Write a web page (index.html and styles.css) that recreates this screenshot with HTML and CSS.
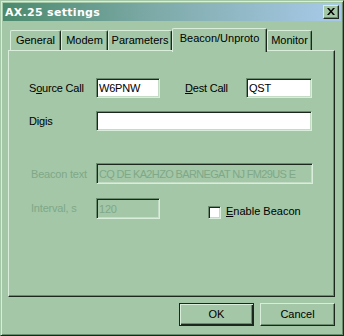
FILE: index.html
```html
<!DOCTYPE html>
<html>
<head>
<meta charset="utf-8">
<link rel="stylesheet" href="styles.css">
</head>
<body>
<div class="window">
  <div class="titlebar">
    <span class="title">AX.25 settings</span>
    <span class="close"><svg width="8" height="7" viewBox="0 0 8 7"><path d="M0 0h2l2 2.5 2-2.5h2l-3 3.5 3 3.5h-2l-2-2.5-2 2.5h-2l3-3.5z" fill="#000"/></svg></span>
  </div>
  <div class="tabs">
    <div class="tab t-general">General</div>
    <div class="tab t-modem">Modem</div>
    <div class="tab t-params">Parameters</div>
    <div class="tab active t-beacon">Beacon/Unproto</div>
    <div class="tab t-monitor">Monitor</div>
  </div>
  <div class="panel">
    <div class="row r1">
      <span class="label">S<u>o</u>urce Call</span>
      <span class="input w-src">W6PNW</span>
      <span class="label label-dest"><u>D</u>est Call</span>
      <span class="input w-dst">QST</span>
    </div>
    <div class="row r2">
      <span class="label">Digis</span>
      <span class="input w-digis"></span>
    </div>
    <div class="row r3">
      <span class="label disabled lbl-beacon">Beacon text</span>
      <span class="input off w-beacon">CQ DE KA2HZO BARNEGAT NJ FM29US E</span>
    </div>
    <div class="row r4">
      <span class="label disabled lbl-beacon">Interval, s</span>
      <span class="input off w-int">120</span>
      <span class="check"></span>
      <span class="check-label"><u>E</u>nable Beacon</span>
    </div>
  </div>
  <div class="buttons">
    <div class="btn default">OK</div>
    <div class="btn">Cancel</div>
  </div>
</div>
</body>
</html>
```

FILE: styles.css
```css
html, body {
  margin: 0;
  padding: 0;
  background: #a3c7a7;
}
.window {
  width: 344px;
  height: 336px;
  box-sizing: border-box;
  background: #a3c7a7;
  border: 1px solid;
  border-color: #a3c7a7 #1c281e #1c281e #a3c7a7;
  box-shadow: inset 1px 1px 0 #d8eeda, inset -1px -1px 0 #6b8c6f;
  padding: 2px;
  font-family: "Liberation Sans", Arial, sans-serif;
  font-size: 11px;
  color: #000;
  display: flex;
  flex-direction: column;
}
.titlebar {
  height: 18px;
  flex: none;
  background: linear-gradient(to right, #4b8a6d 0%, #7eaaa8 45%, #a8caea 100%);
  display: flex;
  align-items: center;
  justify-content: space-between;
  padding: 0 2px 0 2px;
}
.title {
  font-family: "DejaVu Sans", Verdana, sans-serif;
  font-weight: bold;
  font-size: 11px;
  color: #fff;
  letter-spacing: 0.3px;
}
.close {
  width: 16px;
  height: 14px;
  box-sizing: border-box;
  background: #a3c7a7;
  border: 1px solid;
  border-color: #d8eeda #1c281e #1c281e #d8eeda;
  box-shadow: inset -1px -1px 0 #6b8c6f;
  display: flex;
  align-items: center;
  justify-content: center;
  padding: 0 1px 1px 0;
}
.tabs {
  display: flex;
  align-items: flex-start;
  height: 22px;
  margin-top: 7px;
  padding-left: 7px;
  flex: none;
}
.tab {
  height: 20px;
  margin-top: 2px;
  box-sizing: border-box;
  border-top: 1px solid #d8eeda;
  border-left: 1px solid #d8eeda;
  border-right: 1px solid #1c281e;
  box-shadow: inset -1px 0 0 #6b8c6f;
  border-radius: 2px 2px 0 0;
  text-align: center;
  line-height: 19px;
  background: #a3c7a7;
}
.t-general { width: 51px; }
.t-modem { width: 47px; }
.t-params { width: 64px; }
.t-beacon { width: 95px; }
.t-monitor { width: 45px; }
.tab.active {
  height: 24px;
  margin-top: 0;
  position: relative;
  z-index: 1;
  line-height: 18px;
}
.panel {
  margin-left: 5px;
  width: 327px;
  height: 247px;
  box-sizing: border-box;
  border: 1px solid;
  border-color: #d8eeda #1c281e #1c281e #d8eeda;
  box-shadow: inset -1px -1px 0 #6b8c6f;
  padding: 27px 0 0 20px;
  flex: none;
}
.row {
  display: flex;
  align-items: center;
}
.r2 { margin-top: 13px; }
.r3 { margin-top: 32px; }
.r4 { margin-top: 13px; align-items: flex-start; }
.label {
  width: 67px;
  flex: none;
  letter-spacing: -0.2px;
}
.r4 .label, .r4 .input { align-self: center; }
.label-dest {
  margin-left: 25px;
  width: 61px;
}
.lbl-beacon { padding-left: 2px; width: 65px; }
.disabled { color: #80a888; }
.input {
  height: 20px;
  box-sizing: border-box;
  background: #fff;
  border: 1px solid;
  border-color: #6b8c6f #d8eeda #d8eeda #6b8c6f;
  box-shadow: inset 1px 1px 0 #1c281e, inset -1px -1px 0 #c4dcc6;
  padding: 2px 0 0 2px;
  line-height: 14px;
  white-space: nowrap;
  overflow: hidden;
  letter-spacing: -0.2px;
}
.input.off {
  background: #a3c7a7;
  color: #80a888;
  height: 21px;
  padding-top: 3px;
}
.w-beacon { letter-spacing: -0.65px; }
.w-src { width: 64px; }
.w-dst { width: 66px; }
.w-digis { width: 216px; }
.w-beacon { width: 217px; }
.w-int { width: 64px; }
.check {
  width: 13px;
  height: 13px;
  box-sizing: border-box;
  background: #fff;
  border: 1px solid;
  border-color: #6b8c6f #d8eeda #d8eeda #6b8c6f;
  box-shadow: inset 1px 1px 0 #1c281e, inset -1px -1px 0 #c4dcc6;
  margin: 9px 0 0 48px;
}
.check-label {
  margin: 8px 0 0 5px;
}
.buttons {
  display: flex;
  justify-content: flex-end;
  gap: 6px;
  margin-top: 6px;
  padding-right: 6px;
}
.btn {
  width: 75px;
  height: 23px;
  box-sizing: border-box;
  border: 1px solid;
  border-color: #d8eeda #1c281e #1c281e #d8eeda;
  box-shadow: inset -1px -1px 0 #6b8c6f;
  text-align: center;
  line-height: 20px;
}
.btn.default {
  border: 1px solid #1c281e;
  box-shadow: inset 1px 1px 0 #d8eeda, inset -1px -1px 0 #1c281e, inset -2px -2px 0 #6b8c6f;
}
```
